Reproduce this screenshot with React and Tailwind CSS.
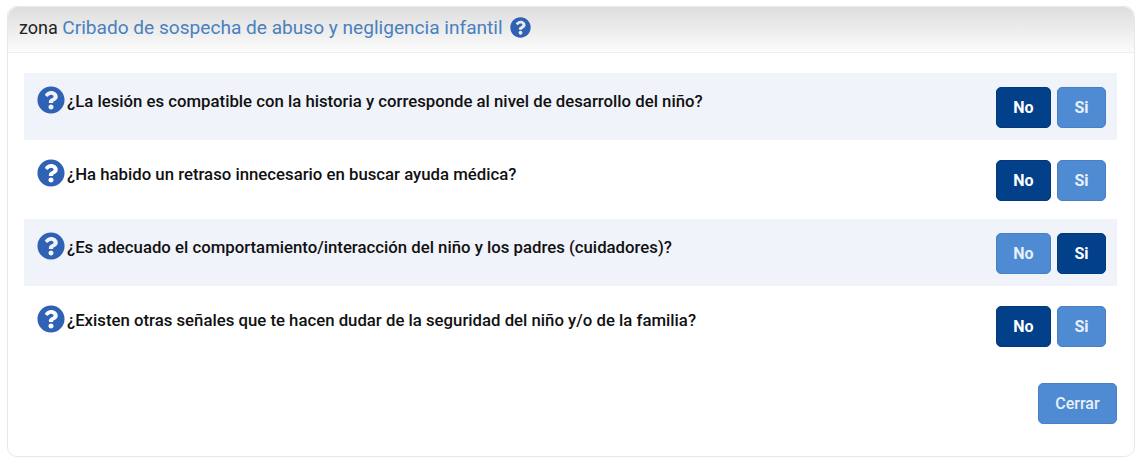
import { FaQuestionCircle } from 'react-icons/fa';

const questions = [
    { text: '¿La lesión es compatible con la historia y corresponde al nivel de desarrollo del niño?', answer: 'No' },
    { text: '¿Ha habido un retraso innecesario en buscar ayuda médica?', answer: 'No' },
    { text: '¿Es adecuado el comportamiento/interacción del niño y los padres (cuidadores)?', answer: 'Si' },
    { text: '¿Existen otras señales que te hacen dudar de la seguridad del niño y/o de la familia?', answer: 'No' },
];

function AnswerButton({ label, active, width }) {
    return (
        <button
            className={`h-[41px] ${width} rounded-[5px] border text-[16px] font-bold ${
                active
                    ? 'border-[#03397a] bg-[#03408a] text-white'
                    : 'border-[#4a80c2] bg-[#4f8bd2] text-[#e8f0fa]'
            }`}
        >
            {label}
        </button>
    );
}

export default function App() {
    return (
        <div className="h-[464px] w-[1141px] overflow-hidden bg-white pl-[7px] pt-[6px] font-['Roboto',sans-serif]">
            <div className="h-[451px] w-[1128px] rounded-[10px] border border-[#e6e8ec] bg-white">
                <div className="flex h-[46px] items-center gap-[7px] rounded-t-[10px] border-b border-[#eeeeee] bg-gradient-to-b from-[#dedede] to-[#fbfbfb] pb-[2px] pl-[11px]">
                    <h4 className="text-[18px] text-[#222222]">
                        zona <span className="text-[19.1px] text-[#4a80bd]">Cribado de sospecha de abuso y negligencia infantil</span>
                    </h4>
                    <FaQuestionCircle className="mb-[3px] text-[21px] text-[#2f62b5]" />
                </div>
                <div className="ml-[16px] mt-[20px] flex w-[1093px] flex-col gap-[6px]">
                    {questions.map((question, index) => (
                        <div
                            key={question.text}
                            className={`flex h-[67px] justify-between pl-[13px] pr-[11px] pt-[13px] ${
                                index % 2 === 0 ? 'bg-[#f0f3fa]' : 'bg-white'
                            }`}
                        >
                            <div className="flex items-start gap-[2px]">
                                <FaQuestionCircle className="text-[28px] text-[#2f62b5]" />
                                <p className="pt-[5px] text-[16.75px] font-medium leading-[20px] text-[#111111]">{question.text}</p>
                            </div>
                            <div className="flex gap-[6px] pt-px">
                                <AnswerButton label="No" active={question.answer === 'No'} width="w-[55px]" />
                                <AnswerButton label="Si" active={question.answer === 'Si'} width="w-[49px]" />
                            </div>
                        </div>
                    ))}
                </div>
                <div className="mr-[17px] mt-[24px] flex justify-end">
                    <button className="h-[41px] w-[79px] rounded-[5px] border border-[#4a80c2] bg-[#4f8bd2] text-[16px] font-medium text-[#e8f0fa]">
                        Cerrar
                    </button>
                </div>
            </div>
        </div>
    );
}
